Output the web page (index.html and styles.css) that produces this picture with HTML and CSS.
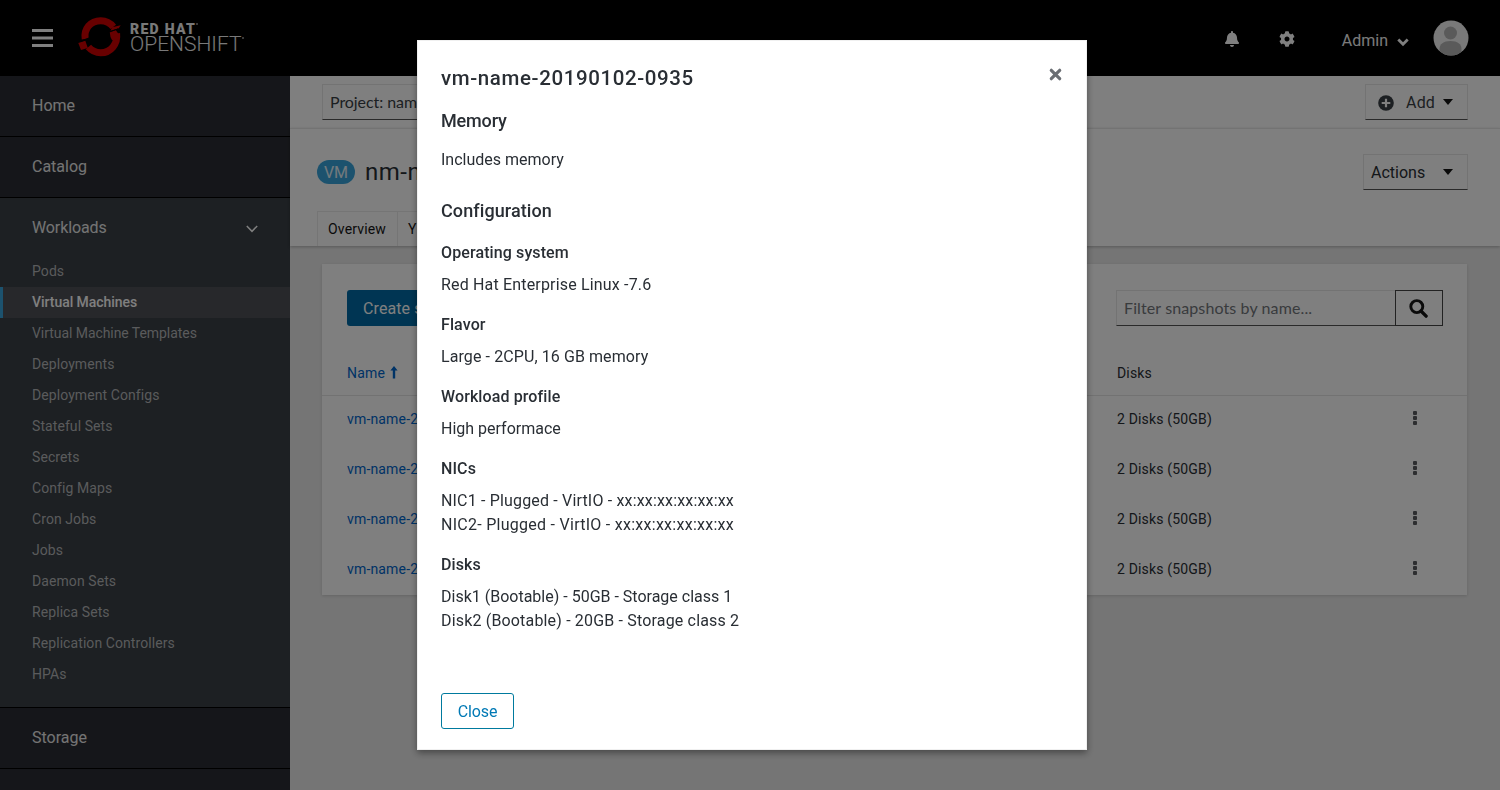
FILE: index.html
```html
<!DOCTYPE html>
<html lang="en">
<head>
<meta charset="utf-8">
<title>Red Hat OpenShift</title>
<link rel="stylesheet" href="styles.css">
</head>
<body>
<div class="app">
  <header class="masthead">
    <svg class="burger" width="21" height="18" viewBox="0 0 21 18"><path d="M0 0h21v3H0zM0 7.500h21v3H0zM0 15h21v3H0z" fill="#fff"/></svg>
    <div class="brand">
      <svg class="brand-mark" width="44" height="42" viewBox="0 0 44 42">
        <path d="M7.200 23C5.600 13 12.500 4.700 22.700 4.700c5.200 0 9.600 2.300 12.600 6.200" fill="none" stroke="#d00000" stroke-width="7"/>
        <path d="M38.600 17.500c1.300 10.200-5.600 19.200-15.900 19.200-5 0-9.300-2.200-12.300-5.700" fill="none" stroke="#d00000" stroke-width="7"/>
        <path d="M34 11.300l8.700-2-2 2.900-8.200 2.600zM31.700 16l6-2 3.500 5-2 6-5.200-1-1.500-3zM.3 27l7-2.300 2.500 7.300L3 34z" fill="#d00000"/>
        <path d="M2.500 25.400l10.500-4" stroke="#000" stroke-width="1.200"/>
        <path d="M31 16.200l9-3.300" stroke="#000" stroke-width="1"/>
      </svg>
      <div class="brand-text">
        <span class="brand-top">RED HAT</span>
        <span class="brand-bottom">OPENSHIFT</span>
      </div>
    </div>
    <div class="tools">
      <svg class="bell" width="14" height="16" viewBox="0 0 448 512" fill="#fff"><path d="M224 512c35.320 0 63.970-28.650 63.970-64H160.030c0 35.350 28.650 64 63.970 64zm215.390-149.710c-19.320-20.760-55.470-51.990-55.470-154.290 0-77.700-54.480-139.900-127.940-155.160V32c0-17.670-14.320-32-31.980-32s-31.980 14.330-31.980 32v20.840C118.560 68.100 64.080 130.300 64.080 208c0 102.300-36.150 133.530-55.470 154.290-6 6.450-8.660 14.160-8.610 21.710.11 16.400 12.980 32 32.100 32h383.800c19.120 0 32-15.600 32.100-32 .05-7.550-2.610-15.270-8.610-21.710z"/></svg>
      <svg class="gear" width="16" height="16" viewBox="0 0 512 512" fill="#fff"><path d="M487.400 315.700l-42.600-24.600c4.300-23.200 4.300-47 0-70.200l42.600-24.600c4.900-2.800 7.100-8.600 5.500-14-11.100-35.600-30-67.800-54.700-94.600-3.800-4.100-10-5.100-14.800-2.300L380.800 110c-17.900-15.400-38.500-27.300-60.800-35.100V25.800c0-5.600-3.900-10.500-9.400-11.700-36.700-8.200-74.300-7.800-109.200 0-5.500 1.200-9.400 6.100-9.400 11.700V75c-22.200 7.900-42.800 19.800-60.800 35.100L88.700 85.500c-4.900-2.800-11-1.900-14.800 2.300-24.700 26.700-43.600 58.900-54.700 94.600-1.700 5.400.6 11.200 5.500 14L67.300 221c-4.300 23.200-4.300 47 0 70.200l-42.600 24.600c-4.900 2.800-7.100 8.600-5.500 14 11.100 35.600 30 67.800 54.700 94.600 3.800 4.100 10 5.100 14.800 2.300l42.600-24.600c17.900 15.400 38.500 27.300 60.800 35.100v49.200c0 5.600 3.900 10.500 9.400 11.700 36.700 8.200 74.300 7.800 109.200 0 5.500-1.200 9.400-6.100 9.400-11.700v-49.200c22.200-7.900 42.800-19.800 60.800-35.100l42.600 24.600c4.900 2.800 11 1.900 14.800-2.300 24.700-26.700 43.600-58.900 54.700-94.600 1.500-5.500-.7-11.300-5.600-14.100zM256 336c-44.100 0-80-35.900-80-80s35.900-80 80-80 80 35.900 80 80-35.900 80-80 80z"/></svg>
      <span class="user">Admin</span>
      <svg class="user-caret" width="12" height="9" viewBox="0 0 12 9"><path d="M1.300 1.500L6 6.300l4.700-4.800" fill="none" stroke="#fff" stroke-width="2.800"/></svg>
      <svg class="avatar" width="36" height="36" viewBox="0 0 36 36"><defs><clipPath id="face"><circle cx="18" cy="18" r="17.500"/></clipPath></defs><circle cx="18" cy="18" r="17.500" fill="#f2f2f2"/><g clip-path="url(#face)" fill="#b5b5b5"><circle cx="17.500" cy="13" r="6.500"/><path d="M6.500 36v-7c0-5 4-8 11-8s11 3 11 8v7z"/></g></svg>
    </div>
  </header>

  <div class="body">
    <nav class="sidebar">
      <a class="nav-top">Home</a>
      <a class="nav-top">Catalog</a>
      <div class="nav-group">
        <a class="nav-head">Workloads
          <svg width="12" height="8" viewBox="0 0 12 8"><path d="M.8.9L6 6.300 11.200.9" fill="none" stroke="#fff" stroke-width="1.500"/></svg>
        </a>
        <a class="nav-item">Pods</a>
        <a class="nav-item current">Virtual Machines</a>
        <a class="nav-item tight">Virtual Machine Templates</a>
        <a class="nav-item">Deployments</a>
        <a class="nav-item">Deployment Configs</a>
        <a class="nav-item">Stateful Sets</a>
        <a class="nav-item">Secrets</a>
        <a class="nav-item">Config Maps</a>
        <a class="nav-item">Cron Jobs</a>
        <a class="nav-item">Jobs</a>
        <a class="nav-item">Daemon Sets</a>
        <a class="nav-item">Replica Sets</a>
        <a class="nav-item">Replication Controllers</a>
        <a class="nav-item">HPAs</a>
      </div>
      <a class="nav-top">Storage</a>
      <div class="nav-rest"></div>
    </nav>

    <main class="main">
      <div class="project-bar">
        <div class="select project">Project: nam</div>
        <div class="select add">
          <svg width="16" height="16" viewBox="0 0 16 16"><circle cx="8" cy="8" r="7.800" fill="#393f44"/><path d="M8 3.700v8.600M3.700 8h8.600" stroke="#fff" stroke-width="2.200"/></svg>
          <span class="add-label">Add</span>
          <span class="caret"></span>
        </div>
      </div>
      <div class="page-head">
        <div class="title-row">
          <span class="badge">VM</span>
          <h1 class="vm-title">nm-n</h1>
          <div class="select actions"><span>Actions</span><span class="caret"></span></div>
        </div>
        <div class="tabs"><span class="tab">Overview</span><span class="tab">Y</span></div>
      </div>
      <div class="content">
        <section class="card">
          <div class="card-tools">
            <span class="create">Create s</span>
            <div class="search">
              <span class="search-field">Filter snapshots by name...</span>
              <span class="search-btn"><svg width="19" height="19" viewBox="0 0 19 19"><circle cx="7.800" cy="7.600" r="6" fill="none" stroke="#151515" stroke-width="2.900"/><path d="M12 12l5.100 5.100" stroke="#151515" stroke-width="3.400" stroke-linecap="round"/></svg></span>
            </div>
          </div>
          <div class="row head">
            <span class="link">Name <svg width="8" height="13" viewBox="0 0 8 13"><path d="M4 0l3.600 4.500H5.200V12.500H2.800V4.500H.4z" fill="#06c"/></svg></span>
            <span>Disks</span>
          </div>
          <div class="row"><span class="link">vm-name-2</span><span class="disks">2 Disks (50GB)</span><span class="kebab"><i></i><i></i><i></i></span></div>
          <div class="row"><span class="link">vm-name-2</span><span class="disks">2 Disks (50GB)</span><span class="kebab"><i></i><i></i><i></i></span></div>
          <div class="row"><span class="link">vm-name-2</span><span class="disks">2 Disks (50GB)</span><span class="kebab"><i></i><i></i><i></i></span></div>
          <div class="row"><span class="link">vm-name-2</span><span class="disks">2 Disks (50GB)</span><span class="kebab"><i></i><i></i><i></i></span></div>
        </section>
      </div>
    </main>
  </div>
</div>

<div class="backdrop">
  <div class="modal">
    <div class="modal-head">
      <h2 class="modal-title">vm-name-20190102-0935</h2>
      <svg class="close-x" width="13" height="13" viewBox="0 0 13 13"><path d="M2.300 2.300l8.400 8.400M10.700 2.300l-8.400 8.400" stroke="#6a6e73" stroke-width="3.200" stroke-linecap="round"/></svg>
    </div>
    <h3 class="section memory">Memory</h3>
    <p class="text includes">Includes memory</p>
    <h3 class="section config">Configuration</h3>
    <div class="fields">
      <div class="field"><h4>Operating system</h4><p class="text">Red Hat Enterprise Linux -7.6</p></div>
      <div class="field"><h4>Flavor</h4><p class="text snug">Large - 2CPU, 16 GB memory</p></div>
      <div class="field"><h4>Workload profile</h4><p class="text flat">High performace</p></div>
      <div class="field"><h4>NICs</h4><p class="text">NIC1 - Plugged - VirtIO - xx:xx:xx:xx:xx:xx</p><p class="text wide">NIC2- Plugged - VirtIO - xx:xx:xx:xx:xx:xx</p></div>
      <div class="field"><h4>Disks</h4><p class="text flat">Disk1 (Bootable) - 50GB - Storage class 1</p><p class="text">Disk2 (Bootable) - 20GB - Storage class 2</p></div>
    </div>
    <button class="close-btn">Close</button>
  </div>
</div>
</body>
</html>
```
FILE: styles.css
```css
* { box-sizing: border-box; }
body, h1, h2, h3, h4, p { margin: 0; }
body { font: 16px/24px Roboto, sans-serif; color: #292e34; overflow: hidden; }
.app { height: 790px; display: flex; flex-direction: column; overflow: hidden; }

.masthead { height: 76px; flex: none; background: #000; display: flex; align-items: center; padding: 0 31px 0 32px; color: #fff; }
.burger { margin-top: -1px; }
.brand { display: flex; align-items: center; margin-left: 25px; margin-top: -2px; gap: 8px; }
.brand-text { display: flex; flex-direction: column; color: #f2f2f2; margin-top: 0; }
.brand-top, .brand-bottom { display: flex; }
.brand-top { font: 900 14px/14px Roboto, sans-serif; letter-spacing: 1.300px; }
.brand-bottom { font: 300 21px/17px Roboto, sans-serif; letter-spacing: 0; }
.brand-top::after, .brand-bottom::after { content: ""; width: 2px; height: 2px; margin-top: 1px; border-radius: 1px; background: #999; }
.tools { margin-left: auto; display: flex; align-items: center; }
.bell { margin-top: 2px; }
.gear { margin: 2px 0 0 40px; }
.user { margin: 6px 0 0 47px; color: #f5f5f5; }
.user-caret { margin: 8px 0 0 9px; }
.avatar { margin: 0 0 0 24px; }

.body { flex: 1; display: flex; min-height: 0; }
.sidebar { width: 290px; flex: none; background: #2b2d34; color: #e8e8e8; display: flex; flex-direction: column; }
.nav-top { height: 61px; padding: 18px 32px; border-bottom: 1px solid #000; flex: none; }
.nav-group { background: #3a4046; height: 510px; border-bottom: 1px solid #000; flex: none; display: flex; flex-direction: column; }
.nav-head { height: 58px; padding: 18px 32px 0; display: flex; justify-content: space-between; letter-spacing: -.12px; }
.nav-head svg { margin-top: 9px; }
.nav-item { height: 31px; padding: 0 32px; font-size: 14px; line-height: 31px; color: #b4b6b8; letter-spacing: .08px; }
.nav-item.tight { letter-spacing: -.06px; }
.nav-item.current { background: #4f5056; border-left: 3px solid #39a5dc; padding-left: 29px; color: #fff; font-weight: 500; letter-spacing: -.04px; }
.nav-rest { flex: 1; background: #2b2d34; }

.main { flex: 1; background: #ebebeb; display: flex; flex-direction: column; min-width: 0; }
.project-bar { height: 52px; flex: none; background: #fff; display: flex; justify-content: space-between; padding: 8px 32px 0; }
.select { height: 36px; border: 1px solid #e6e6e6; border-bottom: 1px solid #555; display: flex; align-items: center; }
.project { width: 280px; padding-left: 7px; font-family: Lato, sans-serif; letter-spacing: -.07px; color: #393f44; }
.add { width: 103px; padding: 1px 13px 0 12px; }
.add-label { margin: 0 8px 0 12px; letter-spacing: .2px; color: #393f44; }
.caret { border: 5.500px solid transparent; border-top: 6px solid #151515; border-bottom: 0; margin-top: -2px; }
.page-head { height: 118px; flex: none; background: #fff; border-top: 1px solid #e6e6e6; box-shadow: 0 1px 3px rgba(0,0,0,.25); padding: 25px 32px 0 27px; display: flex; flex-direction: column; justify-content: space-between; }
.title-row { display: flex; align-items: center; }
.badge { width: 38px; height: 24px; border-radius: 12px; background: #39a5dc; color: #e6f3fa; text-align: center; line-height: 25px; }
.vm-title { font-size: 24px; font-weight: 400; margin-left: 10px; letter-spacing: .5px; }
.actions { margin-left: auto; width: 105px; padding: 1px 14px 0 7px; justify-content: space-between; }
.tabs { display: flex; height: 35px; border-top: 1px solid #ebebeb; width: 160px; }
.tab { border-left: 1px solid #ebebeb; width: 80px; font-size: 14px; line-height: 35px; padding-left: 10px; letter-spacing: .16px; white-space: nowrap; color: #151515; flex: none; }

.content { padding: 18px 33px 0 32px; }
.card { height: 331px; background: #fff; box-shadow: 0 1px 3px rgba(0,0,0,.15); }
.card-tools { display: flex; justify-content: space-between; padding: 26px 24px 0 25px; height: 87px; }
.create { height: 36px; width: 142px; background: #006ba6; color: #fff; border-radius: 3px; line-height: 37px; padding-left: 16px; letter-spacing: .1px; }
.search { display: flex; height: 36px; width: 327px; }
.search-field { flex: 1; border: 1px solid #e6e6e6; border-right: 0; border-bottom: 1px solid #555; font-family: Lato, sans-serif; color: #72767b; line-height: 34px; padding-left: 7px; letter-spacing: .11px; }
.search-btn { width: 48px; border: 1px solid #444; display: flex; align-items: center; justify-content: center; }
.search-btn svg { margin-right: 1px; }
.row { display: grid; grid-template-columns: 770px 289px 20px; padding-left: 25px; height: 50px; align-items: center; font-size: 14px; letter-spacing: .17px; }
.row.head { height: 45px; border-bottom: 1px solid #e4e4e4; margin-bottom: -2px; }
.link { color: #06c; }
.row.head .link svg { margin-left: 1px; vertical-align: -1px; }
.kebab { display: flex; flex-direction: column; align-items: center; gap: 1px; width: 18px; margin-top: -2px; }
.kebab i { width: 4px; height: 4px; border-radius: 1px; background: #5a5d60; }

.backdrop { position: fixed; inset: 0; z-index: 10; background: rgba(0,0,0,.5); }
.modal { position: absolute; left: 417px; top: 40px; width: 670px; height: 710px; padding: 25px 23px 20px; background: #fff; border: 1px solid #f0f0f0; box-shadow: 0 3px 7px rgba(0,0,0,.4); display: flex; flex-direction: column; }
.modal-head { display: flex; justify-content: space-between; height: 24px; }
.modal-title { font-size: 20.500px; font-weight: 500; letter-spacing: .61px; }
.close-x { margin: 2px 1px 0 0; }
.section { font-size: 18px; font-weight: 500; }
.memory { margin-top: 19px; letter-spacing: -.15px; }
.config { margin-top: 27px; letter-spacing: .09px; }
.text { letter-spacing: .17px; }
.text.includes { margin-top: 15px; letter-spacing: 0; }
.text.snug { letter-spacing: .09px; }
.text.flat { letter-spacing: 0; }
.text.wide { letter-spacing: .27px; }
.fields { margin-top: 18px; display: flex; flex-direction: column; gap: 16px; }
.field h4 { font-size: 16px; font-weight: 500; letter-spacing: .11px; margin-bottom: 8px; }
.close-btn { margin-top: 60px; width: 73px; height: 36px; flex: none; background: #fff; border: 1px solid #007a9e; border-radius: 3px; color: #0079b5; font: 16px/34px Roboto, sans-serif; letter-spacing: -.1px; padding: 1px 0 0; }
```
